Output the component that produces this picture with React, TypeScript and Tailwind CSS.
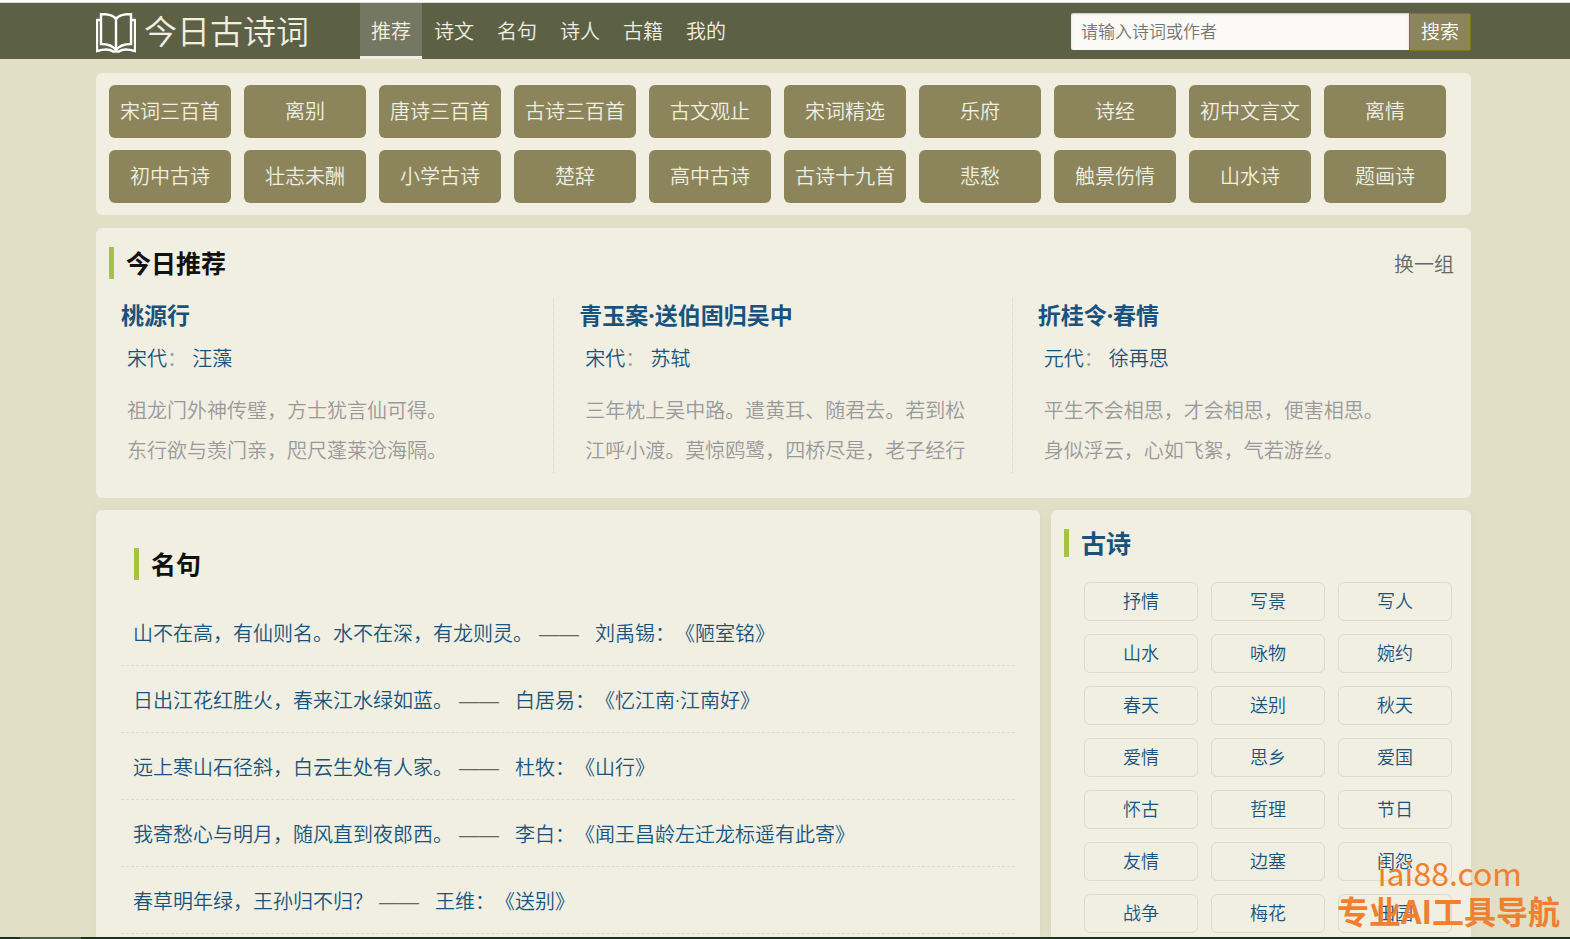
const navItems = ["推荐", "诗文", "名句", "诗人", "古籍", "我的"];

const categories = [
  "宋词三百首",
  "离别",
  "唐诗三百首",
  "古诗三百首",
  "古文观止",
  "宋词精选",
  "乐府",
  "诗经",
  "初中文言文",
  "离情",
  "初中古诗",
  "壮志未酬",
  "小学古诗",
  "楚辞",
  "高中古诗",
  "古诗十九首",
  "悲愁",
  "触景伤情",
  "山水诗",
  "题画诗",
];

type Poem = {
  title: string;
  dynasty: string;
  author: string;
  lines: string[];
};

const poems: Poem[] = [
  {
    title: "桃源行",
    dynasty: "宋代",
    author: "汪藻",
    lines: ["祖龙门外神传璧，方士犹言仙可得。", "东行欲与羡门亲，咫尺蓬莱沧海隔。"],
  },
  {
    title: "青玉案·送伯固归吴中",
    dynasty: "宋代",
    author: "苏轼",
    lines: [
      "三年枕上吴中路。遣黄耳、随君去。若到松",
      "江呼小渡。莫惊鸥鹭，四桥尽是，老子经行",
    ],
  },
  {
    title: "折桂令·春情",
    dynasty: "元代",
    author: "徐再思",
    lines: ["平生不会相思，才会相思，便害相思。", "身似浮云，心如飞絮，气若游丝。"],
  },
];

const quotes = [
  { text: "山不在高，有仙则名。水不在深，有龙则灵。", source: "刘禹锡：《陋室铭》" },
  { text: "日出江花红胜火，春来江水绿如蓝。", source: "白居易：《忆江南·江南好》" },
  { text: "远上寒山石径斜，白云生处有人家。", source: "杜牧：《山行》" },
  { text: "我寄愁心与明月，随风直到夜郎西。", source: "李白：《闻王昌龄左迁龙标遥有此寄》" },
  { text: "春草明年绿，王孙归不归？", source: "王维：《送别》" },
];

const tags = [
  "抒情", "写景", "写人",
  "山水", "咏物", "婉约",
  "春天", "送别", "秋天",
  "爱情", "思乡", "爱国",
  "怀古", "哲理", "节日",
  "友情", "边塞", "闺怨",
  "战争", "梅花", "田园",
];

function BookIcon() {
  return (
    <svg
      className="size-10"
      viewBox="0 0 40 40"
      fill="none"
      stroke="#fff"
      strokeWidth="2.4"
      aria-hidden="true"
    >
      <path d="M20 6C18 3 13 1 5 1v30c7 0 12 2 15 6 3-4 8-6 15-6V1C27 1 22 3 20 6Z" />
      <path d="M20 6v31" />
      <path d="M5 7H1v31c7-2 13-2 16 0.500h6c3-2.500 9-2.500 16-0.500V7h-4" />
    </svg>
  );
}

function Header() {
  return (
    <header className="shrink-0 border-t border-[#dcdce6] bg-[#5c6146] text-[#f0efe2]">
      <div className="flex h-14 items-stretch pl-24 pr-[99px]">
        <a href="#home" className="flex w-[264px] items-start gap-2 pt-2.5">
          <BookIcon />
          <span className="text-[33px] leading-[38px]">今日古诗词</span>
        </a>
        <nav className="flex gap-px">
          {navItems.map((item, i) => (
            <a
              key={item}
              href={`#nav-${i}`}
              className={
                i === 0
                  ? "border-b-3 border-[#f0efe2] bg-[#747863] px-[11px] pt-[15px] text-xl"
                  : "px-[11px] pt-[15px] text-xl"
              }
            >
              {item}
            </a>
          ))}
        </nav>
        <form className="ml-auto flex items-start pt-2.5">
          <input
            type="text"
            aria-label="搜索诗词"
            placeholder="请输入诗词或作者"
            className="h-[37px] w-[338px] rounded-l-xs bg-[#fbfaf6] px-2.5 text-[17px] text-[#333] shadow-[inset_0_1px_2px_rgba(0,0,0,0.2)] placeholder:text-[#757575]"
          />
          <button
            type="button"
            className="h-[38px] w-[62px] rounded-r-xs border border-[#86731b] bg-[#8c855b] text-[19px] text-white"
          >
            搜索
          </button>
        </form>
      </div>
    </header>
  );
}

function Categories() {
  return (
    <section className="grid grid-cols-10 gap-x-[13px] gap-y-3 rounded-md bg-[#f0efe2] py-3 pl-[13px] pr-[25px]">
      {categories.map((name) => (
        <a
          key={name}
          href={`#${name}`}
          className="flex h-[53px] items-center justify-center whitespace-nowrap rounded-md bg-[#8c855b] pt-px text-xl text-[#f0efe2]"
        >
          {name}
        </a>
      ))}
    </section>
  );
}

function PoemColumn({ poem, last }: { poem: Poem; last: boolean }) {
  return (
    <article
      className={
        last
          ? "h-[175px] pl-[25px]"
          : "h-[175px] border-r border-dotted border-[#d5d5cc] pl-[25px]"
      }
    >
      <h3 className="text-[23px] font-bold leading-[34px] text-[#19537d]">
        <a href={`#${poem.title}`}>{poem.title}</a>
      </h3>
      <div className="pl-1.5">
        <p className="pt-[11px] text-xl leading-8 text-[#999]">
          <a href={`#${poem.dynasty}`} className="text-[#19537d]">
            {poem.dynasty}
          </a>
          ：{" "}
          <a href={`#${poem.author}`} className="text-[#19537d]">
            {poem.author}
          </a>
        </p>
        <p className="pt-4 text-xl leading-10 text-[#999]">
          {poem.lines.map((line) => (
            <span key={line} className="block whitespace-nowrap">
              {line}
            </span>
          ))}
        </p>
      </div>
    </article>
  );
}

function Recommend() {
  return (
    <section className="rounded-md bg-[#f0efe2] pb-[25px] pt-[19px]">
      <div className="mb-[19px] flex items-end justify-between pl-[13px] pr-[17px]">
        <h2 className="border-l-5 border-[#a2c442] pl-3 text-[25px] font-bold leading-8 text-[#111]">
          今日推荐
        </h2>
        <button type="button" className="text-xl text-[#666]">
          换一组
        </button>
      </div>
      <div className="grid grid-cols-3">
        {poems.map((poem, i) => (
          <PoemColumn key={poem.title} poem={poem} last={i === poems.length - 1} />
        ))}
      </div>
    </section>
  );
}

function Quotes() {
  return (
    <section className="flex-1 rounded-t-md bg-[#f0efe2] px-[25px] pt-[38px] shadow-[0_0_12px_rgba(0,0,0,0.04)]">
      <h2 className="mb-[19px] ml-[13px] border-l-5 border-[#a2c442] pl-3 text-[25px] font-bold leading-8 text-[#111]">
        名句
      </h2>
      <ul>
        {quotes.map((quote) => (
          <li
            key={quote.text}
            className="flex h-[67px] items-center gap-1.5 whitespace-nowrap border-b border-dashed border-[#dadacd] pl-3 pt-1 text-xl text-[#19537d]"
          >
            <a href={`#${quote.text}`}>{quote.text}</a>
            <span className="font-['Liberation_Sans','Noto_Sans_CJK_SC',sans-serif] text-[#666]">
              ——
            </span>
            <a href={`#${quote.source}`} className="pl-2.5">
              {quote.source}
            </a>
          </li>
        ))}
      </ul>
    </section>
  );
}

function Tags() {
  return (
    <aside className="w-[420px] rounded-t-md bg-[#f0efe2] pl-[13px] pr-[19px] pt-[19px] shadow-[0_0_12px_rgba(0,0,0,0.04)]">
      <h2 className="border-l-5 border-[#a2c442] pl-3 text-[25px] font-bold leading-7 text-[#19537d]">
        <a href="#gushi">古诗</a>
      </h2>
      <div className="mt-[25px] grid grid-cols-3 gap-[13px] pl-5">
        {tags.map((tag) => (
          <a
            key={tag}
            href={`#${tag}`}
            className="flex h-[39px] items-center justify-center rounded-md border border-[#dadace] pb-0.5 text-lg leading-6 text-[#19537d]"
          >
            {tag}
          </a>
        ))}
      </div>
    </aside>
  );
}

export default function App() {
  return (
    <div className="relative flex h-screen flex-col overflow-hidden bg-[#e1dfc6] pt-0.5 font-['Noto_Sans','Noto_Sans_CJK_SC',sans-serif] font-[350] [text-spacing-trim:space-all] before:absolute before:inset-x-0 before:top-0 before:h-0.5 before:bg-white">
      <Header />
      <main className="flex min-h-0 flex-1 flex-col overflow-hidden pl-24 pr-[99px] pt-3.5">
        <div className="flex flex-col gap-[13px]">
          <Categories />
          <Recommend />
        </div>
        <div className="mt-3 flex flex-1 gap-[11px]">
          <Quotes />
          <Tags />
        </div>
      </main>
      <footer className="flex h-0.5 shrink-0 bg-[#1b3020] pl-5">
        <span className="w-[61px] bg-[#4c5f4c]" />
      </footer>
      <div className="pointer-events-none absolute bottom-2.5 right-2.5 text-right font-['Noto_Sans_CJK_SC',sans-serif] text-[#f08030]">
        <p className="pr-[38px] text-[32px] font-normal leading-[38px]">iai88.com</p>
        <p className="text-[32px] font-bold leading-[38px]">专业AI工具导航</p>
      </div>
    </div>
  );
}
